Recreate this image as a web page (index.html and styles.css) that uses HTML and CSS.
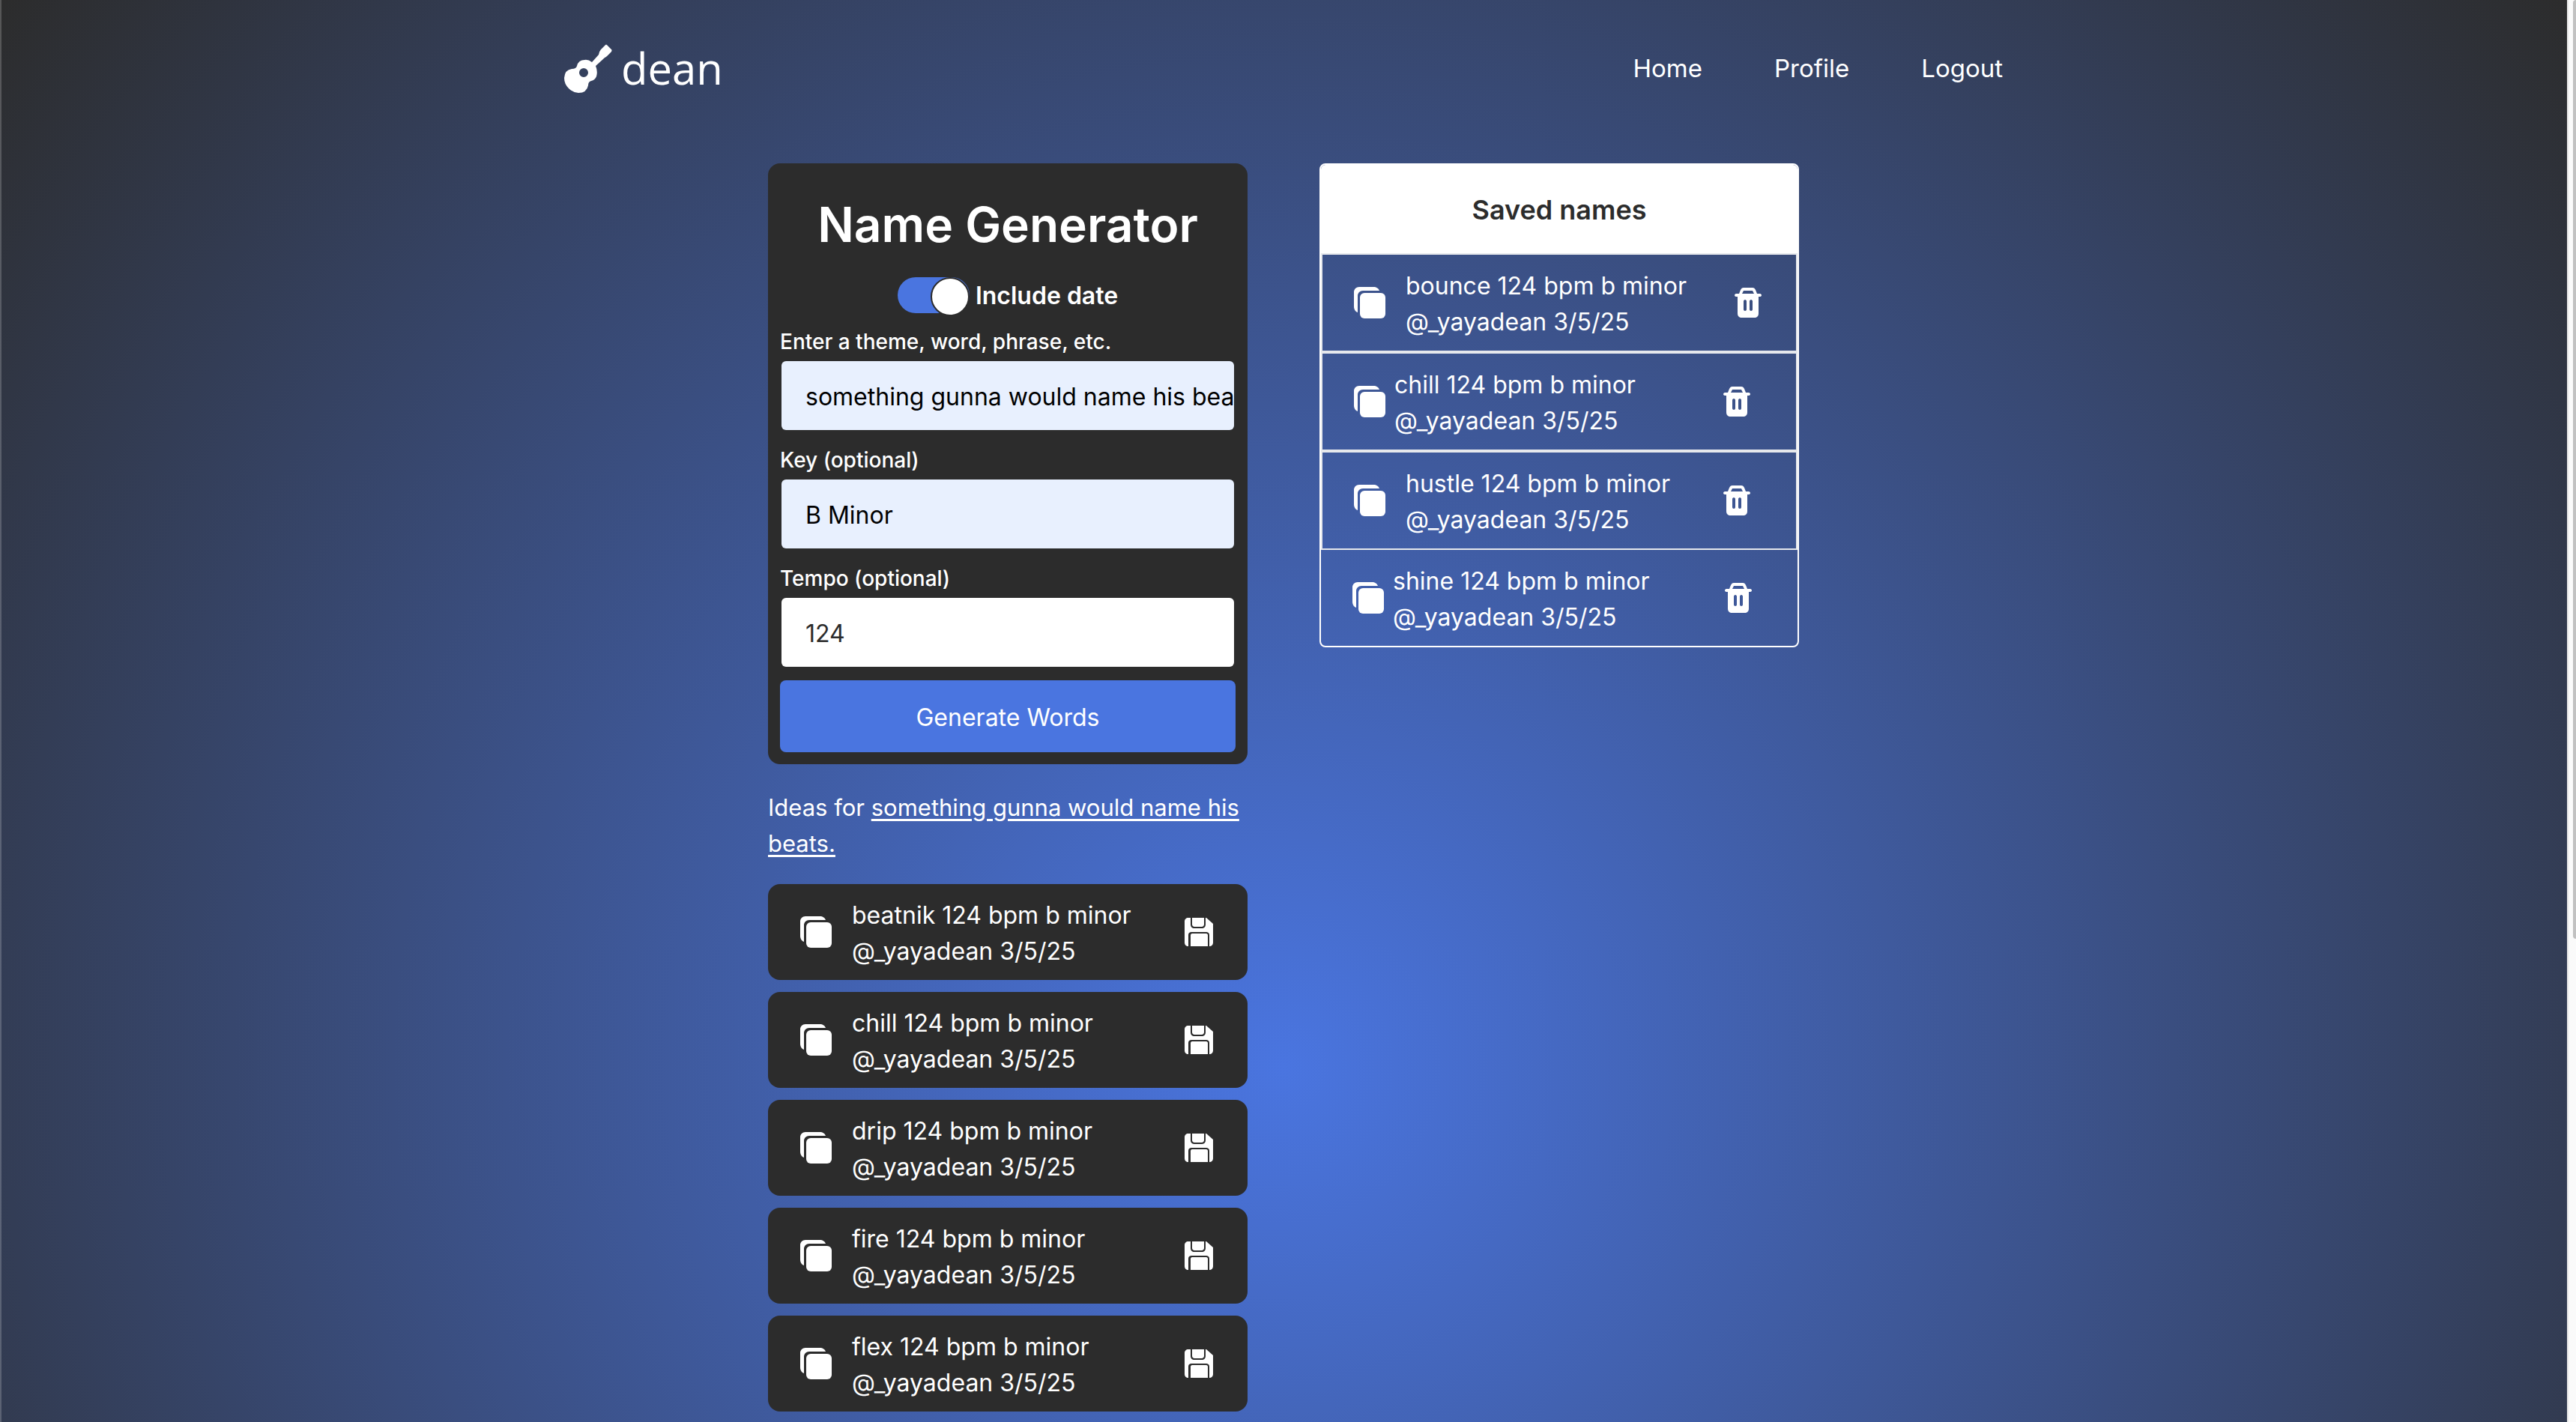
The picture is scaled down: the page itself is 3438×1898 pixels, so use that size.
FILE: index.html
```html
<!DOCTYPE html>
<html lang="en">
<head>
<meta charset="utf-8">
<title>dean – Name Generator</title>
<link rel="stylesheet" href="styles.css">
</head>
<body>
<svg class="sprite" aria-hidden="true">
  <symbol id="copy" viewBox="0 0 42 42">
    <path d="M7 0H26C30 0 33 2 34 5H12C8 5 5 8 5 12V34C2 33 0 30 0 26V7C0 3 3 0 7 0Z"/>
    <rect x="8" y="8" width="34" height="34" rx="6"/>
  </symbol>
  <symbol id="save" viewBox="0 0 38 38">
    <path fill-rule="evenodd" d="M5 0H8V9C8 12 10 14 13 14H23C26 14 28 12 28 9V0H29L38 8V33C38 36 36 38 33 38V23C33 20 31 19 29 19H9C7 19 5 20 5 23V38C2 38 0 36 0 33V5C0 2 2 0 5 0Z"/>
    <path d="M10 0H26V9C26 11 24 12 23 12H13C12 12 10 11 10 9Z"/>
    <path d="M8 38V23C8 22 9 21 10 21H29C30 21 31 22 31 23V38Z"/>
  </symbol>
  <symbol id="trash" viewBox="0 0 36 40">
    <path fill-rule="evenodd" d="M12 0H24C26 0 27 1 28 3L30 8H34C35 8 36 9 36 10S35 12 34 12H32V34C32 38 30 40 26 40H10C6 40 4 38 4 34V12H2C1 12 0 11 0 10S1 8 2 8H6L8 3C9 1 10 0 12 0ZM12 4L10 8H26L24 4ZM14 16C13 16 12 17 12 18V29C12 30 13 31 14 31S16 30 16 29V18C16 17 15 16 14 16ZM22 16C21 16 20 17 20 18V29C20 30 21 31 22 31S24 30 24 29V18C24 17 23 16 22 16Z"/>
  </symbol>
</svg>
<div class="page">
  <header class="site-header">
    <a class="brand" href="#">
      <svg class="guitar" viewBox="0 0 64 65" aria-hidden="true">
        <path fill-rule="evenodd" d="M55 1Q56 0 57 1L63 7Q64 8 63 10L57 16Q56 17 54 18L42 29Q45 36 43 43Q41 48 36 49Q32 50 32 55Q30 65 19 65Q12 65 6 59Q0 53 0 45Q1 34 10 33Q16 33 17 29Q19 21 27 21Q32 20 37 24L46 14Q47 9 49 7ZM26 32A6 6 0 1 0 26 44A6 6 0 1 0 26 32Z"/>
      </svg>
      <span>dean</span>
    </a>
    <nav class="nav">
      <a href="#">Home</a>
      <a href="#">Profile</a>
      <a href="#">Logout</a>
    </nav>
  </header>
  <main class="columns">
    <section class="column">
      <form class="generator">
        <h1>Name Generator</h1>
        <label class="switch-row"><input class="switch" type="checkbox" checked><span>Include date</span></label>
        <label class="field-label" for="theme">Enter a theme, word, phrase, etc.</label>
        <input class="field filled" id="theme" type="text" value="something gunna would name his beats.">
        <label class="field-label" for="key">Key (optional)</label>
        <input class="field filled" id="key" type="text" value="B Minor">
        <label class="field-label" for="tempo">Tempo (optional)</label>
        <input class="field" id="tempo" type="text" value="124">
        <button class="generate" type="button">Generate Words</button>
      </form>
      <p class="ideas">Ideas for <u>something gunna would name his beats.</u></p>
      <ul class="results">
        <li class="row"><button type="button" aria-label="Copy"><svg class="copy"><use href="#copy"/></svg></button><p>beatnik 124 bpm b minor<br>@_yayadean 3/5/25</p><button type="button" aria-label="Save"><svg class="save"><use href="#save"/></svg></button></li>
        <li class="row"><button type="button" aria-label="Copy"><svg class="copy"><use href="#copy"/></svg></button><p>chill 124 bpm b minor<br>@_yayadean 3/5/25</p><button type="button" aria-label="Save"><svg class="save"><use href="#save"/></svg></button></li>
        <li class="row"><button type="button" aria-label="Copy"><svg class="copy"><use href="#copy"/></svg></button><p>drip 124 bpm b minor<br>@_yayadean 3/5/25</p><button type="button" aria-label="Save"><svg class="save"><use href="#save"/></svg></button></li>
        <li class="row"><button type="button" aria-label="Copy"><svg class="copy"><use href="#copy"/></svg></button><p>fire 124 bpm b minor<br>@_yayadean 3/5/25</p><button type="button" aria-label="Save"><svg class="save"><use href="#save"/></svg></button></li>
        <li class="row"><button type="button" aria-label="Copy"><svg class="copy"><use href="#copy"/></svg></button><p>flex 124 bpm b minor<br>@_yayadean 3/5/25</p><button type="button" aria-label="Save"><svg class="save"><use href="#save"/></svg></button></li>
      </ul>
    </section>
    <section class="column">
      <div class="saved">
        <h2>Saved names</h2>
        <ul>
          <li class="row roomy far"><button type="button" aria-label="Copy"><svg class="copy"><use href="#copy"/></svg></button><p>bounce 124 bpm b minor<br>@_yayadean 3/5/25</p><button type="button" aria-label="Delete"><svg class="trash"><use href="#trash"/></svg></button></li>
          <li class="row"><button type="button" aria-label="Copy"><svg class="copy"><use href="#copy"/></svg></button><p>chill 124 bpm b minor<br>@_yayadean 3/5/25</p><button type="button" aria-label="Delete"><svg class="trash"><use href="#trash"/></svg></button></li>
          <li class="row roomy"><button type="button" aria-label="Copy"><svg class="copy"><use href="#copy"/></svg></button><p>hustle 124 bpm b minor<br>@_yayadean 3/5/25</p><button type="button" aria-label="Delete"><svg class="trash"><use href="#trash"/></svg></button></li>
          <li class="row"><button type="button" aria-label="Copy"><svg class="copy"><use href="#copy"/></svg></button><p>shine 124 bpm b minor<br>@_yayadean 3/5/25</p><button type="button" aria-label="Delete"><svg class="trash"><use href="#trash"/></svg></button></li>
        </ul>
      </div>
    </section>
  </main>
</div>
<div class="scrollbar" aria-hidden="true"><div class="thumb"></div></div>
</body>
</html>
```
FILE: styles.css
```css
* { box-sizing: border-box; margin: 0; padding: 0; }

body {
  display: flex;
  height: 100vh;
  overflow: hidden;
  font-family: "Inter", sans-serif;
  font-size: 32px;
  line-height: 48px;
  color: #fff;
}

.sprite { display: none; }
svg { fill: currentColor; display: block; }
ul { list-style: none; }
button, input { font: inherit; color: inherit; border: 0; }
button { background: none; cursor: pointer; }
a { color: inherit; text-decoration: none; }

.page {
  flex: 1;
  overflow: hidden;
  padding: 0 16px;
  background: radial-gradient(circle at 50% 75%, #4a75e0, #2c2c2c);
  box-shadow: inset 2px 0 rgba(255, 255, 255, 0.2);
}

.scrollbar { width: 12px; background: #fafafa; border-left: 2px solid #e8e8e8; padding-left: 6px; }
.thumb { height: 66vh; background: #c1c1c1; border-radius: 8px 0 0 8px; }

.site-header {
  display: flex;
  align-items: center;
  justify-content: space-between;
  width: 1920px;
  max-width: 100%;
  height: 182px;
  margin: 0 auto;
}
.brand { display: flex; align-items: center; gap: 12px; font: 58px/64px "Open Sans", sans-serif; }
.guitar { width: 64px; height: 65px; }
.nav { display: flex; gap: 96px; font-size: 33px; }

.columns { display: flex; justify-content: center; gap: 96px; padding-top: 36px; }
.column { width: 640px; }

.generator {
  display: flex;
  flex-direction: column;
  padding: 34px 16px 16px;
  border-radius: 16px;
  background: #2c2c2c;
}
h1 { font-size: 64px; line-height: 96px; font-weight: 600; text-align: center; }
.switch-row { display: flex; justify-content: center; align-items: center; gap: 8px; height: 48px; margin: 22px 0 16px; font-weight: 600; }
.switch-row span { padding-top: 2px; }
.switch { appearance: none; display: flex; justify-content: flex-end; width: 96px; height: 48px; border-radius: 24px; background: #4a75e0; }
.switch::before { content: ""; width: 48px; height: 48px; border: 2px solid #2c2c2c; border-radius: 50%; background: #fff; }
.field-label { font-size: 28px; line-height: 40px; font-weight: 500; margin: 2px 0 6px; }
.field { height: 92px; margin: 0 2px 18px; padding: 2px 0 0 32px; border-radius: 6px; background: #fff; color: #2c2c2c; }
.filled { background: #e8f0fe; color: #000; }
.generate { height: 96px; padding-top: 3px; border-radius: 8px; background: #4a75e0; }

.ideas { margin: 34px 0 30px; font-size: 31px; }
u { text-decoration-thickness: 3px; text-underline-offset: 4px; }
.results { display: flex; flex-direction: column; gap: 16px; }

.row { display: flex; align-items: center; height: 128px; padding: 0 46px 0 43px; }
.row p { flex: 1; padding-top: 4px; white-space: nowrap; }
.copy { width: 42px; height: 42px; }
.save { width: 38px; height: 38px; }
.trash { width: 36px; height: 40px; }
.results .row { border-radius: 16px; background: #2c2c2c; }
.results .row p { padding-left: 27px; }

.saved { border: 2px solid #fff; border-radius: 8px; overflow: hidden; }
.saved h2 { height: 118px; background: #fff; color: #2c2c2c; font-size: 36px; line-height: 120px; font-weight: 600; text-align: center; }
.saved .row { height: 132px; padding: 0 61px 0 42px; border: 2px solid #e6e8ec; }
.saved .row p { padding-left: 12px; }
.saved .roomy p { padding-left: 27px; }
.saved .far { padding-right: 46px; }
.saved .row:last-child { height: 128px; border: 0; }
```
